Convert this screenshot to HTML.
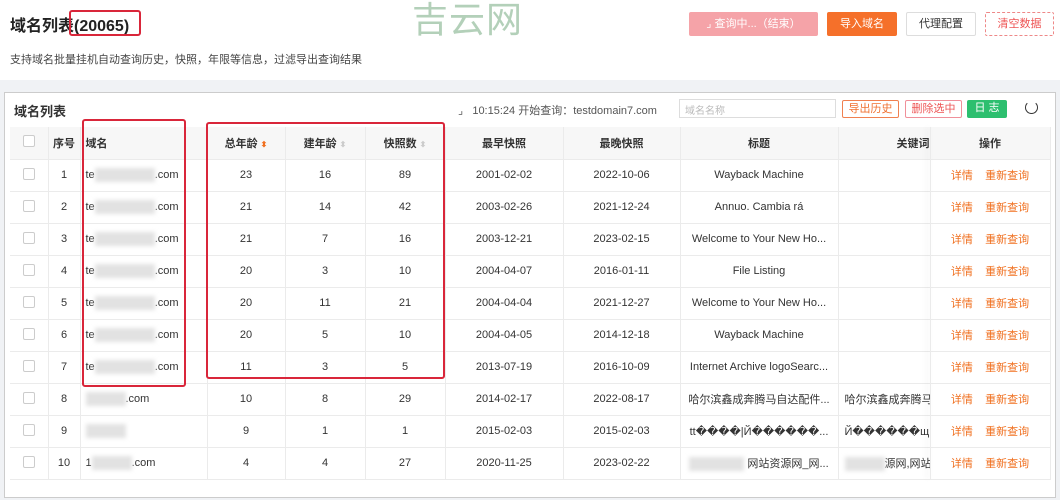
<!DOCTYPE html>
<html><head><meta charset="utf-8"><style>
*{margin:0;padding:0;box-sizing:border-box}
body{width:1060px;height:500px;overflow:hidden;background:#f0f2f5;font-family:"Liberation Sans","Noto Sans CJK SC",sans-serif;color:#333;position:relative}
.top{position:absolute;left:0;top:0;width:1060px;height:80px;background:#fff}
.abs{position:absolute}
h1{position:absolute;left:10px;top:12px;font-size:16px;font-weight:bold;color:#222}
.desc{left:10px;top:51px;font-size:11px;color:#444}
.btn{position:absolute;height:24px;top:12px;font-size:11px;line-height:22px;text-align:center;border:1px solid #ddd;border-radius:2px}
.card{position:absolute;left:4px;top:92px;width:1052px;height:406px;background:#fff;border:1px solid #ccc}
table{position:absolute;left:10px;top:127px;width:1040px;border-collapse:collapse;font-size:11px;table-layout:fixed}
td,th{height:32px;border-bottom:1px solid #ebebeb;border-right:1px solid #ebebeb;text-align:center;white-space:nowrap;overflow:hidden}
th{background:#f7f7f7;font-weight:bold;font-size:11px;color:#333}
.cb{display:inline-block;width:12px;height:12px;border:1px solid #ccc;border-radius:2px;background:#fff}
.op{color:#f07020;}
.blur{display:inline-block;width:60px;height:14px;background:#e2e2e2;vertical-align:middle;filter:blur(2px)}
.red{position:absolute;border:2px solid #d9263a;border-radius:3px}
.sm{position:absolute;height:18px;top:100px;font-size:11px;line-height:16px;text-align:center;border-radius:2px}
</style></head><body>
<div class="top"></div>
<h1>域名列表(20065)</h1>
<div class="red" style="left:69px;top:10px;width:72px;height:26px"></div>
<div class="abs" style="left:412px;top:-9px;font-size:36px;color:#b3d0b9;letter-spacing:1px">吉云网</div>
<div class="abs desc">支持域名批量挂机自动查询历史，快照，年限等信息，过滤导出查询结果</div>
<div class="btn" style="left:689px;width:129px;background:#f5a3a8;border-color:#f5a3a8;color:#fff">⌟ 查询中...（结束）</div>
<div class="btn" style="left:827px;width:70px;background:#f5702a;border-color:#f5702a;color:#fff">导入域名</div>
<div class="btn" style="left:906px;width:70px;background:#fff;color:#333">代理配置</div>
<div class="btn" style="left:985px;width:69px;background:#fff;border:1px dashed #e88;color:#e55">清空数据</div>
<div class="card"></div>
<div class="abs" style="left:14px;top:101px;font-size:13px;font-weight:bold">域名列表</div>
<div class="abs" style="left:458px;top:102px;font-size:11px;color:#555">⌟&nbsp;&nbsp;&nbsp;10:15:24 开始查询：testdomain7.com</div>
<div class="abs" style="left:679px;top:99px;width:157px;height:19px;border:1px solid #ddd;font-size:10px;color:#bbb;padding:2px 5px">域名名称</div>
<div class="sm" style="left:842px;width:57px;border:1px solid #f08050;color:#f07030">导出历史</div>
<div class="sm" style="left:905px;width:57px;border:1px solid #f0909a;color:#e55">删除选中</div>
<div class="sm" style="left:967px;width:40px;background:#2dbf6f;color:#fff">日 志</div>
<div class="abs" style="left:1025px;top:101px;width:13px;height:13px;border:1.5px solid #333;border-top-color:transparent;border-radius:50%"></div>
<table>
<colgroup><col style="width:38px"><col style="width:32px"><col style="width:127px"><col style="width:78px"><col style="width:80px"><col style="width:80px"><col style="width:118px"><col style="width:117px"><col style="width:158px"><col style="width:92px"><col style="width:120px"></colgroup>
<tr><th><span class="cb"></span></th><th>序号</th><th style="text-align:left;padding-left:5px">域名</th><th>总年龄 <span style="color:#f07020;font-size:8px">⬍</span></th><th>建年龄 <span style="color:#ccc;font-size:8px">⬍</span></th><th>快照数 <span style="color:#ccc;font-size:8px">⬍</span></th><th>最早快照</th><th>最晚快照</th><th>标题</th><th style="text-align:right">关键词</th><th>操作</th></tr>
<tr><td><span class="cb"></span></td><td>1</td><td style="text-align:left;padding-left:5px">te<span class="blur"></span>.com</td><td>23</td><td>16</td><td>89</td><td>2001-02-02</td><td>2022-10-06</td><td>Wayback Machine</td><td></td><td class="op">详情&nbsp;&nbsp;&nbsp;&nbsp;重新查询</td></tr>
<tr><td><span class="cb"></span></td><td>2</td><td style="text-align:left;padding-left:5px">te<span class="blur"></span>.com</td><td>21</td><td>14</td><td>42</td><td>2003-02-26</td><td>2021-12-24</td><td>Annuo. Cambia rá</td><td></td><td class="op">详情&nbsp;&nbsp;&nbsp;&nbsp;重新查询</td></tr>
<tr><td><span class="cb"></span></td><td>3</td><td style="text-align:left;padding-left:5px">te<span class="blur"></span>.com</td><td>21</td><td>7</td><td>16</td><td>2003-12-21</td><td>2023-02-15</td><td>Welcome to Your New Ho...</td><td></td><td class="op">详情&nbsp;&nbsp;&nbsp;&nbsp;重新查询</td></tr>
<tr><td><span class="cb"></span></td><td>4</td><td style="text-align:left;padding-left:5px">te<span class="blur"></span>.com</td><td>20</td><td>3</td><td>10</td><td>2004-04-07</td><td>2016-01-11</td><td>File Listing</td><td></td><td class="op">详情&nbsp;&nbsp;&nbsp;&nbsp;重新查询</td></tr>
<tr><td><span class="cb"></span></td><td>5</td><td style="text-align:left;padding-left:5px">te<span class="blur"></span>.com</td><td>20</td><td>11</td><td>21</td><td>2004-04-04</td><td>2021-12-27</td><td>Welcome to Your New Ho...</td><td></td><td class="op">详情&nbsp;&nbsp;&nbsp;&nbsp;重新查询</td></tr>
<tr><td><span class="cb"></span></td><td>6</td><td style="text-align:left;padding-left:5px">te<span class="blur"></span>.com</td><td>20</td><td>5</td><td>10</td><td>2004-04-05</td><td>2014-12-18</td><td>Wayback Machine</td><td></td><td class="op">详情&nbsp;&nbsp;&nbsp;&nbsp;重新查询</td></tr>
<tr><td><span class="cb"></span></td><td>7</td><td style="text-align:left;padding-left:5px">te<span class="blur"></span>.com</td><td>11</td><td>3</td><td>5</td><td>2013-07-19</td><td>2016-10-09</td><td>Internet Archive logoSearc...</td><td></td><td class="op">详情&nbsp;&nbsp;&nbsp;&nbsp;重新查询</td></tr>
<tr><td><span class="cb"></span></td><td>8</td><td style="text-align:left;padding-left:5px"><span class="blur" style="width:40px"></span>.com</td><td>10</td><td>8</td><td>29</td><td>2014-02-17</td><td>2022-08-17</td><td>哈尔滨鑫成奔腾马自达配件...</td><td style="text-align:left;padding-left:6px">哈尔滨鑫成奔腾马</td><td class="op">详情&nbsp;&nbsp;&nbsp;&nbsp;重新查询</td></tr>
<tr><td><span class="cb"></span></td><td>9</td><td style="text-align:left;padding-left:5px"><span class="blur" style="width:40px"></span></td><td>9</td><td>1</td><td>1</td><td>2015-02-03</td><td>2015-02-03</td><td>tt����|Й������...</td><td style="text-align:left;padding-left:6px">Й������щ</td><td class="op">详情&nbsp;&nbsp;&nbsp;&nbsp;重新查询</td></tr>
<tr><td><span class="cb"></span></td><td>10</td><td style="text-align:left;padding-left:5px">1<span class="blur" style="width:40px"></span>.com</td><td>4</td><td>4</td><td>27</td><td>2020-11-25</td><td>2023-02-22</td><td><span class="blur" style="width:55px"></span> 网站资源网_网...</td><td style="text-align:left;padding-left:6px"><span class="blur" style="width:40px"></span>源网,网站资</td><td class="op">详情&nbsp;&nbsp;&nbsp;&nbsp;重新查询</td></tr>
</table>
<div class="abs" style="left:930px;top:127px;width:1px;height:352px;box-shadow:-3px 0 6px rgba(0,0,0,.12)"></div>
<div class="red" style="left:82px;top:119px;width:104px;height:268px"></div>
<div class="red" style="left:206px;top:122px;width:239px;height:257px"></div>
</body></html>
